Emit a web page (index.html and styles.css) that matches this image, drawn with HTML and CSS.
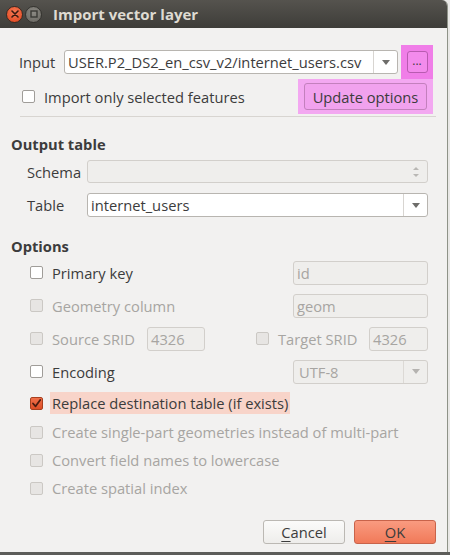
FILE: index.html
```html
<!DOCTYPE html>
<html>
<head>
<meta charset="utf-8">
<link rel="stylesheet" href="styles.css">
</head>
<body>
<div class="window">
  <div class="titlebar">
    <span class="tb-btn tb-close">
      <svg width="8" height="8" viewBox="0 0 8 8"><path d="M1 1 L7 7 M7 1 L1 7" stroke="#3a1a10" stroke-width="1.6" stroke-linecap="round"/></svg>
    </span>
    <span class="tb-btn tb-max">
      <svg width="8" height="8" viewBox="0 0 8 8"><rect x="1" y="1" width="6" height="6" fill="none" stroke="#3a3935" stroke-width="1.4"/></svg>
    </span>
    <span class="tb-title">Import vector layer</span>
  </div>

  <div class="content">
    <div class="row-input">
      <span class="lbl-input">Input</span>
      <div class="combo combo-input">
        <span class="combo-text">USER.P2_DS2_en_csv_v2/internet_users.csv</span>
        <span class="combo-arrow"><span class="tri"></span></span>
      </div>
      <div class="pink-strong">
        <span class="btn-dots">...</span>
      </div>
    </div>

    <div class="row-import">
      <span class="check"></span>
      <span class="lbl">Import only selected features</span>
      <div class="pink-light">
        <span class="btn-update">Update options</span>
      </div>
    </div>

    <div class="separator"></div>

    <div class="heading h-output">Output table</div>

    <div class="row-field r-schema">
      <span class="lbl field-lbl">Schema</span>
      <div class="combo combo-disabled">
        <span class="spin">
          <span class="tri-up"></span>
          <span class="tri-down-s"></span>
        </span>
      </div>
    </div>

    <div class="row-field r-table">
      <span class="lbl field-lbl">Table</span>
      <div class="combo combo-table">
        <span class="combo-text">internet_users</span>
        <span class="combo-arrow"><span class="tri"></span></span>
      </div>
    </div>

    <div class="heading h-options">Options</div>

    <div class="options">
      <div class="opt opt-tall">
        <span class="check"></span>
        <span class="lbl grow">Primary key</span>
        <span class="tinput wide">id</span>
      </div>
      <div class="opt opt-tall dis">
        <span class="check"></span>
        <span class="lbl grow">Geometry column</span>
        <span class="tinput wide">geom</span>
      </div>
      <div class="opt opt-tall dis">
        <span class="check"></span>
        <span class="lbl srid-lbl">Source SRID</span>
        <span class="tinput narrow">4326</span>
        <span class="check target-check"></span>
        <span class="lbl grow">Target SRID</span>
        <span class="tinput narrow2">4326</span>
      </div>
      <div class="opt opt-tall">
        <span class="check"></span>
        <span class="lbl grow">Encoding</span>
        <span class="combo combo-enc">
          <span class="combo-text">UTF-8</span>
          <span class="combo-arrow"><span class="tri tri-dis"></span></span>
        </span>
      </div>
      <div class="opt opt-replace">
        <span class="check checked">
          <svg width="11" height="11" viewBox="0 0 11 11"><path d="M2 5.5 L4.6 8.3 L9.2 2" fill="none" stroke="#4a1c10" stroke-width="1.8" stroke-linecap="round" stroke-linejoin="round"/></svg>
        </span>
        <span class="lbl hl">Replace destination table (if exists)</span>
      </div>
      <div class="opt opt-short dis">
        <span class="check"></span>
        <span class="lbl">Create single-part geometries instead of multi-part</span>
      </div>
      <div class="opt opt-short dis">
        <span class="check"></span>
        <span class="lbl">Convert field names to lowercase</span>
      </div>
      <div class="opt opt-short dis">
        <span class="check"></span>
        <span class="lbl">Create spatial index</span>
      </div>
    </div>

    <div class="buttons">
      <span class="btn btn-cancel"><u>C</u>ancel</span>
      <span class="btn btn-ok"><u>O</u>K</span>
    </div>
  </div>
</div>
<div class="bottom-strip"></div>
</body>
</html>
```

FILE: styles.css
```css
html, body {
  margin: 0;
  padding: 0;
}
body {
  width: 450px;
  height: 555px;
  overflow: hidden;
  background: #e9e8e6;
  font-family: "Open Sans", "DejaVu Sans", sans-serif;
  font-size: 14.7px;
  color: #3c3c3c;
}
.window {
  width: 447px;
  height: 552px;
  background: #f2f1f0;
  border-right: 1px solid #8f9388;
  border-top-right-radius: 6px;
  overflow: hidden;
}
.bottom-strip {
  height: 3px;
  background: #5d5d5a;
}
.titlebar {
  height: 28px;
  background: linear-gradient(#55534e, #3e3d39);
  display: flex;
  align-items: center;
  padding-left: 6px;
  box-sizing: border-box;
}
.tb-btn {
  width: 17px;
  height: 17px;
  border-radius: 50%;
  display: flex;
  align-items: center;
  justify-content: center;
  margin-right: 2px;
  box-sizing: border-box;
}
.tb-close {
  background: radial-gradient(circle at 50% 35%, #f77a55, #e0431b);
  border: 1px solid #3b2a22;
}
.tb-max {
  background: radial-gradient(circle at 50% 35%, #8b8983, #67655f);
  border: 1px solid #34332f;
}
.tb-title {
  margin-left: 9px;
  color: #dfdbd2;
  font-weight: bold;
  font-size: 15px;
}

.content {
  padding: 0 14px 0 0;
}
.row-input {
  display: flex;
  align-items: center;
  height: 34px;
  margin-top: 17px;
  padding-left: 19px;
}
.lbl-input {
  width: 45px;
}
.combo {
  display: flex;
  align-items: center;
  background: #ffffff;
  border: 1px solid #b8b5b0;
  border-radius: 3px;
  height: 24px;
  box-sizing: border-box;
}
.combo-input {
  width: 334px;
}
.combo-text {
  flex: 1;
  padding-left: 3px;
  white-space: nowrap;
  overflow: hidden;
}
.combo-arrow {
  width: 23px;
  height: 100%;
  border-left: 1px solid #d8d5d1;
  display: flex;
  align-items: center;
  justify-content: center;
}
.tri {
  width: 0;
  height: 0;
  border-left: 4px solid transparent;
  border-right: 4px solid transparent;
  border-top: 5px solid #6e6d6a;
}
.tri-dis {
  border-top-color: #b5b3b0;
}
.pink-strong {
  margin-left: 3px;
  width: 32px;
  height: 34px;
  background: #f07ee8;
  display: flex;
  align-items: center;
  justify-content: center;
}
.btn-dots {
  width: 21px;
  height: 22px;
  box-sizing: border-box;
  border: 1px solid #b85bb0;
  border-radius: 3px;
  background: #f38bec;
  display: flex;
  align-items: center;
  justify-content: center;
  font-size: 12px;
  line-height: 1;
  padding-bottom: 2px;
}
.row-import {
  display: flex;
  align-items: center;
  height: 35px;
  padding-left: 22px;
}
.check {
  width: 13px;
  height: 13px;
  box-sizing: border-box;
  border: 1px solid #a09d99;
  border-radius: 2px;
  background: #ffffff;
  flex: none;
  display: flex;
  align-items: center;
  justify-content: center;
}
.row-import .lbl {
  margin-left: 9px;
  flex: 1;
}
.pink-light {
  width: 135px;
  height: 35px;
  background: #f3a8f1;
  display: flex;
  align-items: center;
  justify-content: center;
}
.btn-update {
  width: 123px;
  height: 27px;
  box-sizing: border-box;
  border: 1px solid #c380bd;
  border-radius: 3px;
  background: #f1a2ee;
  display: flex;
  align-items: center;
  justify-content: center;
}
.separator {
  height: 1px;
  background: #d8d5d1;
  margin: 2px 0 0 20px;
  width: 416px;
}
.heading {
  font-weight: bold;
  padding-left: 11px;
  height: 18px;
  line-height: 18px;
}
.h-output {
  margin-top: 18px;
}
.row-field {
  display: flex;
  align-items: center;
  padding-left: 27px;
}
.r-schema {
  margin-top: 7px;
}
.r-table {
  margin-top: 10px;
}
.field-lbl {
  width: 60px;
}
.combo-disabled {
  width: 341px;
  height: 23px;
  background: #efeeec;
  border-color: #d2cfcb;
  justify-content: flex-end;
}
.spin {
  width: 22px;
  display: flex;
  flex-direction: column;
  align-items: center;
  gap: 4px;
}
.tri-up {
  width: 0;
  height: 0;
  border-left: 3px solid transparent;
  border-right: 3px solid transparent;
  border-bottom: 3px solid #b9b7b4;
}
.tri-down-s {
  width: 0;
  height: 0;
  border-left: 3px solid transparent;
  border-right: 3px solid transparent;
  border-top: 3px solid #b9b7b4;
}
.combo-table {
  width: 341px;
}
.h-options {
  margin-top: 20px;
}
.options {
  margin-top: 1px;
  padding-left: 30px;
  padding-right: 5px;
}
.opt {
  display: flex;
  align-items: center;
}
.opt-tall {
  height: 33px;
}
.opt-replace {
  height: 30px;
}
.opt-short {
  height: 28px;
}
.opt .lbl {
  margin-left: 9px;
  white-space: nowrap;
}
.grow {
  flex: 1;
}
.dis {
  color: #a7a5a2;
}
.dis .check {
  background: #e7e5e3;
  border-color: #cbc8c4;
}
.tinput {
  height: 24px;
  box-sizing: border-box;
  border: 1px solid #d2cfcb;
  border-radius: 3px;
  background: #efeeec;
  color: #a7a5a2;
  display: flex;
  align-items: center;
  padding-left: 3px;
}
.wide {
  width: 135px;
}
.srid-lbl {
  width: 95px;
}
.narrow {
  width: 58px;
}
.target-check {
  margin-left: 51px;
}
.narrow2 {
  width: 59px;
}
.combo-enc {
  width: 135px;
  background: #efeeec;
  border-color: #d2cfcb;
  color: #a7a5a2;
}
.combo-enc .combo-text {
  padding-left: 5px;
}
.combo-enc .combo-arrow {
  border-left-color: #dcd9d5;
}
.checked {
  background: linear-gradient(#f0704a, #dd4e26);
  border-color: #a8401f;
}
.hl {
  background: #f8d4c9;
  margin-left: 7px !important;
  padding: 1px 2px 1px 2px;
}
.buttons {
  display: flex;
  justify-content: flex-end;
  gap: 9px;
  margin-top: 18px;
  margin-right: -3px;
}
.btn {
  width: 82px;
  height: 24px;
  box-sizing: border-box;
  border-radius: 3px;
  display: flex;
  align-items: center;
  justify-content: center;
}
.btn-cancel {
  background: linear-gradient(#fbfbfa, #eeedeb);
  border: 1px solid #bbb8b3;
}
.btn-ok {
  background: linear-gradient(#f99b80, #f17a59);
  border: 1px solid #c8634a;
}
.btn u {
  text-decoration-thickness: 1px;
  text-underline-offset: 3px;
}
```
